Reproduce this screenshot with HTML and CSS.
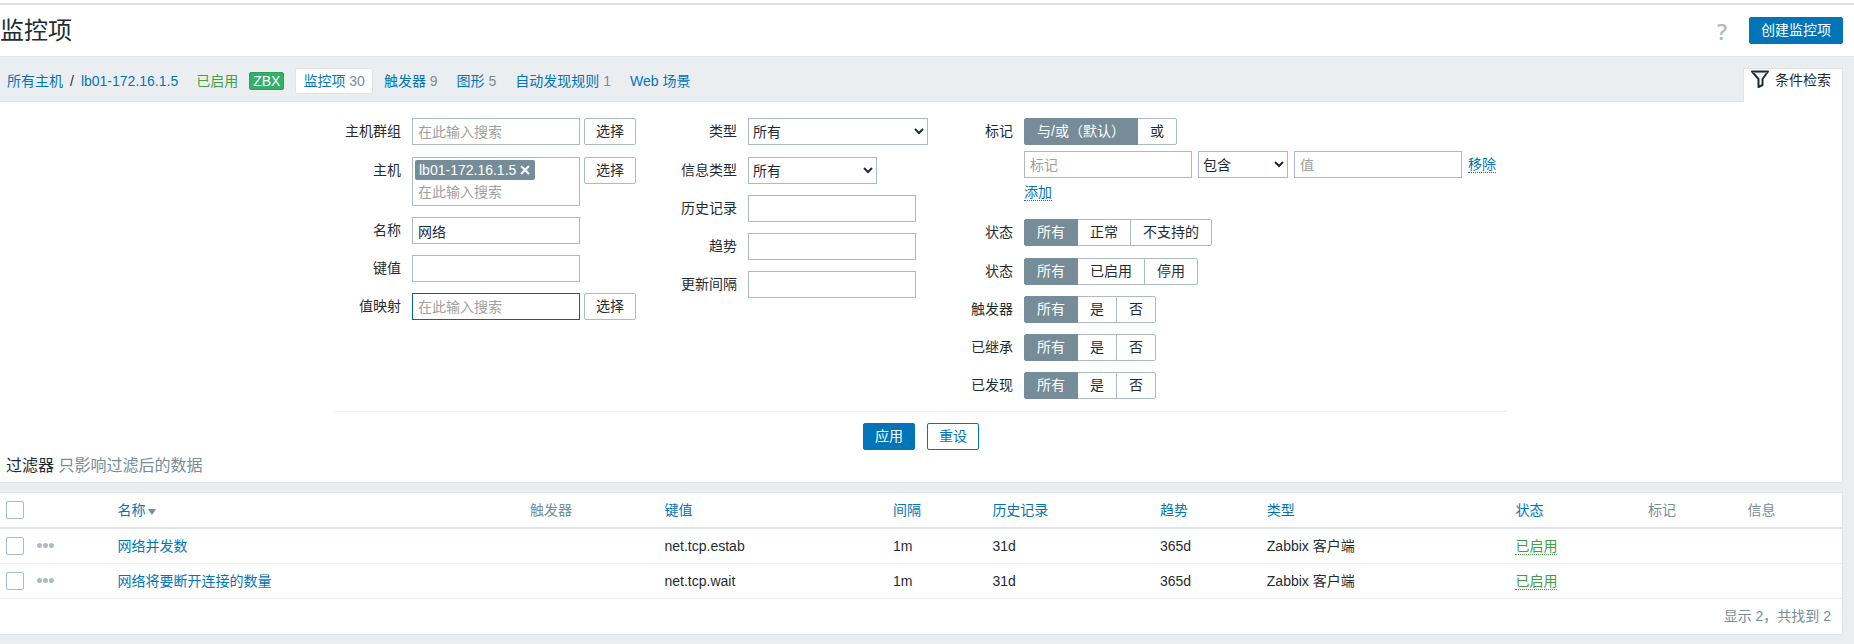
FILE: index.html
```html
<!DOCTYPE html>
<html lang="zh-CN">

<head>
    <meta charset="UTF-8">
    <meta name="viewport" content="width=device-width, initial-scale=1.0">
    <title>监控项</title>
    <link rel="stylesheet" href="styles.css">
</head>

<body>
    <header class="header">
        <h1>监控项</h1>
        <div class="header-controls">
            <a class="help" href="#">?</a>
            <button type="button" class="btn btn-primary">创建监控项</button>
        </div>
    </header>

    <div class="nav-row">
        <nav class="breadcrumbs">
            <a href="#">所有主机</a>
            <span class="slash">/</span>
            <a href="#">lb01-172.16.1.5</a>
            <span class="host-status">已启用</span>
            <span class="badge">ZBX</span>
            <a class="tab selected" href="#">监控项 <span class="count">30</span></a>
            <a class="tab" href="#">触发器 <span class="count">9</span></a>
            <a class="tab" href="#">图形 <span class="count">5</span></a>
            <a class="tab" href="#">自动发现规则 <span class="count">1</span></a>
            <a class="tab" href="#">Web 场景</a>
        </nav>
        <a class="filter-tab" href="#">
            <svg width="20" height="18" viewBox="0 0 20 18" fill="none" stroke="#1f2c33" stroke-width="2" stroke-linejoin="round">
                <path d="M2 1.5h16l-5.5 7.5v6l-4 2V9z" />
                <path d="M3 2.5h14" stroke="#768d99" stroke-width="1" />
            </svg>
            条件检索
        </a>
    </div>

    <main>
        <form class="panel filter">
            <div class="filter-columns">
                <div class="column column-first">
                    <div class="field field-tall">
                        <label for="groups">主机群组</label>
                        <input type="text" id="groups" class="text" placeholder="在此输入搜索">
                        <button type="button" class="btn btn-grey">选择</button>
                    </div>
                    <div class="field">
                        <label for="hosts">主机</label>
                        <div class="multiselect">
                            <span class="chip">lb01-172.16.1.5
                                <button type="button" class="chip-remove" aria-label="移除主机">
                                    <svg width="10" height="10" viewBox="0 0 10 10" stroke="#fff" stroke-width="2">
                                        <path d="M1 1l8 8M9 1l-8 8" />
                                    </svg>
                                </button>
                            </span>
                            <input type="text" id="hosts" placeholder="在此输入搜索">
                        </div>
                        <button type="button" class="btn btn-grey">选择</button>
                    </div>
                    <div class="field">
                        <label for="name">名称</label>
                        <input type="text" id="name" class="text" value="网络">
                    </div>
                    <div class="field">
                        <label for="key">键值</label>
                        <input type="text" id="key" class="text">
                    </div>
                    <div class="field">
                        <label for="valuemap">值映射</label>
                        <input type="text" id="valuemap" class="text active" placeholder="在此输入搜索">
                        <button type="button" class="btn btn-grey">选择</button>
                    </div>
                </div>

                <div class="column column-second">
                    <div class="field field-tall">
                        <label for="type">类型</label>
                        <select id="type" class="select-type">
                            <option>所有</option>
                        </select>
                    </div>
                    <div class="field">
                        <label for="info">信息类型</label>
                        <select id="info" class="select-info">
                            <option>所有</option>
                        </select>
                    </div>
                    <div class="field">
                        <label for="history">历史记录</label>
                        <input type="text" id="history" class="text">
                    </div>
                    <div class="field">
                        <label for="trends">趋势</label>
                        <input type="text" id="trends" class="text">
                    </div>
                    <div class="field">
                        <label for="delay">更新间隔</label>
                        <input type="text" id="delay" class="text">
                    </div>
                </div>

                <div class="column column-third">
                    <div class="field">
                        <span class="label">标记</span>
                        <div class="tags">
                            <div class="radios">
                                <input type="radio" name="evaltype" id="evaltype0" checked><label for="evaltype0">与/或（默认）</label>
                                <input type="radio" name="evaltype" id="evaltype1"><label for="evaltype1">或</label>
                            </div>
                            <div class="tag-row">
                                <input type="text" class="text" placeholder="标记" aria-label="标记">
                                <select class="select-operator" aria-label="运算符">
                                    <option>包含</option>
                                </select>
                                <input type="text" class="text" placeholder="值" aria-label="值">
                                <button type="button" class="btn-link">移除</button>
                            </div>
                            <button type="button" class="btn-link">添加</button>
                        </div>
                    </div>
                    <div class="field field-tall">
                        <span class="label">状态</span>
                        <div class="radios">
                            <input type="radio" name="state" id="state0" checked><label for="state0">所有</label>
                            <input type="radio" name="state" id="state1"><label for="state1">正常</label>
                            <input type="radio" name="state" id="state2"><label for="state2">不支持的</label>
                        </div>
                    </div>
                    <div class="field">
                        <span class="label">状态</span>
                        <div class="radios">
                            <input type="radio" name="status" id="status0" checked><label for="status0">所有</label>
                            <input type="radio" name="status" id="status1"><label for="status1">已启用</label>
                            <input type="radio" name="status" id="status2"><label for="status2">停用</label>
                        </div>
                    </div>
                    <div class="field">
                        <span class="label">触发器</span>
                        <div class="radios">
                            <input type="radio" name="triggers" id="triggers0" checked><label for="triggers0">所有</label>
                            <input type="radio" name="triggers" id="triggers1"><label for="triggers1">是</label>
                            <input type="radio" name="triggers" id="triggers2"><label for="triggers2">否</label>
                        </div>
                    </div>
                    <div class="field">
                        <span class="label">已继承</span>
                        <div class="radios">
                            <input type="radio" name="inherited" id="inherited0" checked><label for="inherited0">所有</label>
                            <input type="radio" name="inherited" id="inherited1"><label for="inherited1">是</label>
                            <input type="radio" name="inherited" id="inherited2"><label for="inherited2">否</label>
                        </div>
                    </div>
                    <div class="field">
                        <span class="label">已发现</span>
                        <div class="radios">
                            <input type="radio" name="discovered" id="discovered0" checked><label for="discovered0">所有</label>
                            <input type="radio" name="discovered" id="discovered1"><label for="discovered1">是</label>
                            <input type="radio" name="discovered" id="discovered2"><label for="discovered2">否</label>
                        </div>
                    </div>
                </div>
            </div>
            <div class="filter-buttons">
                <button type="button" class="btn btn-primary">应用</button>
                <button type="reset" class="btn btn-alt">重设</button>
            </div>
            <h2>过滤器 <span>只影响过滤后的数据</span></h2>
        </form>

        <div class="panel">
            <table>
                <thead>
                    <tr>
                        <th class="col-check"><input type="checkbox" aria-label="全选"></th>
                        <th class="col-menu"></th>
                        <th class="col-name"><a href="#">名称<span class="arrow-down"></span></a></th>
                        <th class="col-triggers">触发器</th>
                        <th class="col-key"><a href="#">键值</a></th>
                        <th class="col-interval"><a href="#">间隔</a></th>
                        <th class="col-history"><a href="#">历史记录</a></th>
                        <th class="col-trends"><a href="#">趋势</a></th>
                        <th class="col-type"><a href="#">类型</a></th>
                        <th class="col-status"><a href="#">状态</a></th>
                        <th class="col-tags">标记</th>
                        <th class="col-info">信息</th>
                    </tr>
                </thead>
                <tbody>
                    <tr>
                        <td><input type="checkbox" aria-label="网络并发数"></td>
                        <td><button type="button" class="dots" aria-label="菜单"><i></i><i></i><i></i></button></td>
                        <td><a href="#">网络并发数</a></td>
                        <td></td>
                        <td>net.tcp.estab</td>
                        <td>1m</td>
                        <td>31d</td>
                        <td>365d</td>
                        <td>Zabbix 客户端</td>
                        <td><a class="enabled" href="#">已启用</a></td>
                        <td></td>
                        <td></td>
                    </tr>
                    <tr>
                        <td><input type="checkbox" aria-label="网络将要断开连接的数量"></td>
                        <td><button type="button" class="dots" aria-label="菜单"><i></i><i></i><i></i></button></td>
                        <td><a href="#">网络将要断开连接的数量</a></td>
                        <td></td>
                        <td>net.tcp.wait</td>
                        <td>1m</td>
                        <td>31d</td>
                        <td>365d</td>
                        <td>Zabbix 客户端</td>
                        <td><a class="enabled" href="#">已启用</a></td>
                        <td></td>
                        <td></td>
                    </tr>
                </tbody>
            </table>
            <div class="table-footer">显示 2，共找到 2</div>
        </div>
    </main>
</body>

</html>
```
FILE: styles.css
```css
* {
    box-sizing: border-box;
}

body {
    margin: 0;
    background-color: #ebeef0;
    color: #1f2c33;
    font-family: "Liberation Sans", Arial, "Noto Sans CJK SC", sans-serif;
    font-size: 14px;
    line-height: 18px;
}

input,
select,
button {
    margin: 0;
    color: inherit;
    font-family: inherit;
    font-size: 14px;
}

a {
    color: #0275b8;
    text-decoration: none;
}

/* Header */
.header {
    display: flex;
    align-items: center;
    justify-content: space-between;
    height: 56px;
    padding: 5px 11px 0 0;
    background: linear-gradient(#dcdfe1, #dcdfe1) 0 3px / 100% 2px no-repeat #fff;
}

.header h1 {
    margin: 0;
    font-size: 24px;
    font-weight: 400;
    line-height: 48px;
}

.header-controls {
    display: flex;
    align-items: center;
    gap: 22px;
}

.help {
    color: #acbbc2;
    font-family: "Open Sans", sans-serif;
    font-size: 22px;
    font-weight: 600;
}

/* Buttons */
.btn {
    height: 27px;
    padding: 0 11px 2px;
    border: 1px solid #0275b8;
    border-radius: 2px;
    line-height: 22px;
    white-space: nowrap;
    cursor: pointer;
}

.btn-primary {
    background-color: #0275b8;
    color: #fff;
}

.btn-alt {
    background-color: #fff;
    color: #0275b8;
}

.btn-grey {
    margin-left: 4px;
    border-color: #acbbc2;
    background-color: #fff;
}

.btn-link {
    padding: 0;
    border: none;
    border-bottom: 1px dotted #0275b8;
    background: none;
    color: #0275b8;
    line-height: 16px;
    cursor: pointer;
}

/* Navigation */
.nav-row {
    display: flex;
    justify-content: space-between;
    height: 45px;
    padding-right: 11px;
    border-top: 1px solid #dfe4e7;
}

.breadcrumbs {
    display: flex;
    align-items: center;
    padding: 4px 0 0 7px;
    white-space: nowrap;
}

.slash {
    margin: 0 7px;
}

.host-status {
    margin: 0 11px 0 18px;
    color: #429e47;
}

.badge {
    margin-right: 11px;
    padding: 0 3px;
    border: 1px solid #2f9f5e;
    border-radius: 2px;
    background-color: #34af67;
    color: #fff;
    line-height: 16px;
}

.tab {
    padding: 2px 7px;
    border: 1px solid transparent;
    margin-right: 3px;
    line-height: 20px;
}

.tab.selected {
    border-color: #dfe4e7;
    border-radius: 2px;
    background-color: #fff;
}

.count {
    color: #768d99;
}

.filter-tab {
    position: relative;
    display: flex;
    gap: 5px;
    margin-top: 11px;
    margin-bottom: -1px;
    padding: 1px 11px 0 6px;
    border: 1px solid #dfe4e7;
    border-bottom: none;
    background-color: #fff;
    color: #1f2c33;
    line-height: 20px;
}

/* Panels */
.panel {
    margin: 0 11px 9px 0;
    border: 1px solid #dfe4e7;
    border-left: none;
    background-color: #fff;
}

.filter h2 {
    margin: 0;
    padding: 5px 6px;
    font-size: 16px;
    font-weight: 400;
    line-height: 22px;
}

.filter h2 span {
    color: #768d99;
}

/* Filter form */
.filter-columns {
    display: flex;
    gap: 36px;
    width: max-content;
    margin: 0 auto;
    padding: 16px 10px 12px 0;
    border-bottom: 1px solid #ebeef0;
}

.column {
    display: flex;
    flex-direction: column;
    gap: 11px;
}

.column-first {
    width: 303px;
}

.column-second {
    width: 254px;
}

.column-third {
    width: 533px;
}

.field {
    display: flex;
    align-items: flex-start;
}

.field-tall {
    min-height: 28px;
}

.field > label,
.label {
    flex: none;
    width: 66px;
    margin-right: 11px;
    line-height: 26px;
    text-align: right;
}

.column-second label {
    width: 63px;
}

.column-third .label {
    width: 49px;
}

.text,
.multiselect,
select {
    width: 168px;
    height: 27px;
    border: 1px solid #acbbc2;
    border-radius: 0;
    background-color: #fff;
}

.text {
    padding: 0 5px;
}

.text.active {
    border-color: #02659f;
}

::placeholder {
    color: #a0a0a0;
}

select {
    padding: 0;
}

.select-type {
    width: 180px;
}

.select-info {
    width: 129px;
}

.select-operator {
    width: 90px;
}

.multiselect {
    height: 49px;
    padding: 2px;
}

.multiselect input {
    width: 100%;
    height: 24px;
    padding: 0 3px;
    border: none;
    outline: none;
    background: none;
}

.chip {
    display: flex;
    align-items: center;
    gap: 4px;
    width: max-content;
    height: 20px;
    padding: 0 5px 1px 4px;
    border-radius: 2px;
    background-color: #768d99;
    color: #fff;
}

.chip-remove {
    display: flex;
    padding: 0;
    border: none;
    background: none;
    cursor: pointer;
}

.radios {
    display: flex;
    width: max-content;
}

.radios input {
    position: absolute;
    opacity: 0;
}

.radios label {
    height: 27px;
    margin-left: -1px;
    padding: 0 12px;
    border: 1px solid #acbbc2;
    background-color: #fff;
    line-height: 24px;
    white-space: nowrap;
    cursor: pointer;
}

.radios label:first-of-type {
    margin-left: 0;
    border-radius: 2px 0 0 2px;
}

.radios label:last-of-type {
    border-radius: 0 2px 2px 0;
}

.radios input:checked + label {
    position: relative;
    border-color: #768d99;
    background-color: #768d99;
    color: #fff;
}

.tags {
    height: 90px;
}

.tag-row {
    display: flex;
    align-items: center;
    gap: 6px;
    margin: 6px 0 5px;
}

.filter-buttons {
    display: flex;
    justify-content: center;
    gap: 12px;
    padding-top: 11px;
}

/* Items table */
table {
    width: 100%;
    border-collapse: collapse;
    table-layout: fixed;
}

th,
td {
    height: 35px;
    padding: 0 5px;
    border-bottom: 1px solid #ebeef0;
    font-weight: 400;
    text-align: left;
    white-space: nowrap;
}

th {
    border-bottom: 2px solid #dfe4e7;
    color: #768d99;
}

th:first-child,
td:first-child {
    padding-left: 6px;
}

.col-check {
    width: 32px;
}

.col-menu {
    width: 79px;
}

.col-name {
    width: 22.4%;
}

.col-triggers {
    width: 7.3%;
}

.col-key {
    width: 12.4%;
}

.col-interval,
.col-tags,
.col-info {
    width: 5.4%;
}

.col-history {
    width: 9.1%;
}

.col-trends {
    width: 5.8%;
}

.col-type {
    width: 13.5%;
}

.col-status {
    width: 7.2%;
}

input[type="checkbox"] {
    display: block;
    width: 18px;
    height: 18px;
    border: 1px solid #acbbc2;
    border-radius: 2px;
    background-color: #fff;
    appearance: none;
}

input[type="checkbox"]:checked {
    background-color: #0275b8;
}

.arrow-down {
    display: inline-block;
    margin-left: 3px;
    border: 4px solid transparent;
    border-top: 6px solid #768d99;
    border-bottom: none;
}

.dots {
    display: flex;
    gap: 1px;
    padding: 0;
    border: none;
    background: none;
    cursor: pointer;
}

.dots i {
    width: 5px;
    height: 5px;
    border-radius: 50%;
    background-color: #acbbc2;
}

.enabled {
    border-bottom: 1px dotted #429e47;
    color: #429e47;
}

.table-footer {
    padding: 8px 11px 9px;
    color: #768d99;
    text-align: right;
}
```
